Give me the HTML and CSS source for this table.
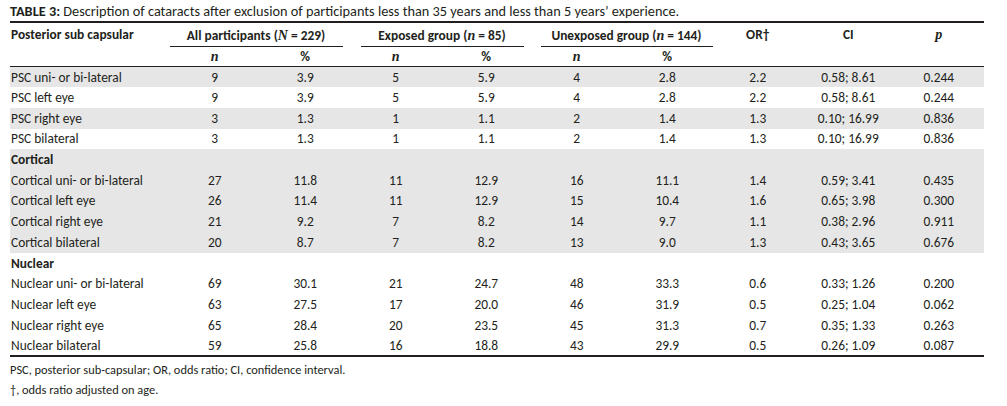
FILE: index.html
```html
<!DOCTYPE html>
<html>
<head>
<meta charset="utf-8">
<link rel="stylesheet" href="styles.css">
</head>
<body>
<div class="wrap">
  <div class="caption"><b>TABLE 3:</b> Description of cataracts after exclusion of participants less than 35 years and less than 5 years’ experience.</div>
  <table class="data">
    <colgroup>
      <col class="c-label"><col><col><col><col><col><col><col><col><col>
    </colgroup>
    <thead>
      <tr class="h1">
        <th class="label">Posterior sub capsular</th>
        <th colspan="2"><div class="grp g1">All participants (<i class="v">N</i> = 229)</div></th>
        <th colspan="2"><div class="grp g2">Exposed group (<i class="v">n</i> = 85)</div></th>
        <th colspan="2"><div class="grp g3">Unexposed group (<i class="v">n</i> = 144)</div></th>
        <th>OR†</th>
        <th>CI</th>
        <th><i class="v">p</i></th>
      </tr>
      <tr class="h2">
        <th></th>
        <th><i class="v">n</i></th><th>%</th>
        <th><i class="v">n</i></th><th>%</th>
        <th><i class="v">n</i></th><th>%</th>
        <th></th><th></th><th></th>
      </tr>
    </thead>
    <tbody>
      <tr class="sh"><td class="label">PSC uni- or bi-lateral</td><td>9</td><td>3.9</td><td>5</td><td>5.9</td><td>4</td><td>2.8</td><td>2.2</td><td>0.58; 8.61</td><td>0.244</td></tr>
      <tr><td class="label">PSC left eye</td><td>9</td><td>3.9</td><td>5</td><td>5.9</td><td>4</td><td>2.8</td><td>2.2</td><td>0.58; 8.61</td><td>0.244</td></tr>
      <tr class="sh"><td class="label">PSC right eye</td><td>3</td><td>1.3</td><td>1</td><td>1.1</td><td>2</td><td>1.4</td><td>1.3</td><td>0.10; 16.99</td><td>0.836</td></tr>
      <tr><td class="label">PSC bilateral</td><td>3</td><td>1.3</td><td>1</td><td>1.1</td><td>2</td><td>1.4</td><td>1.3</td><td>0.10; 16.99</td><td>0.836</td></tr>
      <tr class="sh"><td class="label sect">Cortical</td><td></td><td></td><td></td><td></td><td></td><td></td><td></td><td></td><td></td></tr>
      <tr class="sh"><td class="label">Cortical uni- or bi-lateral</td><td>27</td><td>11.8</td><td>11</td><td>12.9</td><td>16</td><td>11.1</td><td>1.4</td><td>0.59; 3.41</td><td>0.435</td></tr>
      <tr class="sh"><td class="label">Cortical left eye</td><td>26</td><td>11.4</td><td>11</td><td>12.9</td><td>15</td><td>10.4</td><td>1.6</td><td>0.65; 3.98</td><td>0.300</td></tr>
      <tr class="sh"><td class="label">Cortical right eye</td><td>21</td><td>9.2</td><td>7</td><td>8.2</td><td>14</td><td>9.7</td><td>1.1</td><td>0.38; 2.96</td><td>0.911</td></tr>
      <tr class="sh"><td class="label">Cortical bilateral</td><td>20</td><td>8.7</td><td>7</td><td>8.2</td><td>13</td><td>9.0</td><td>1.3</td><td>0.43; 3.65</td><td>0.676</td></tr>
      <tr><td class="label sect">Nuclear</td><td></td><td></td><td></td><td></td><td></td><td></td><td></td><td></td><td></td></tr>
      <tr><td class="label">Nuclear uni- or bi-lateral</td><td>69</td><td>30.1</td><td>21</td><td>24.7</td><td>48</td><td>33.3</td><td>0.6</td><td>0.33; 1.26</td><td>0.200</td></tr>
      <tr><td class="label">Nuclear left eye</td><td>63</td><td>27.5</td><td>17</td><td>20.0</td><td>46</td><td>31.9</td><td>0.5</td><td>0.25; 1.04</td><td>0.062</td></tr>
      <tr><td class="label">Nuclear right eye</td><td>65</td><td>28.4</td><td>20</td><td>23.5</td><td>45</td><td>31.3</td><td>0.7</td><td>0.35; 1.33</td><td>0.263</td></tr>
      <tr class="last"><td class="label">Nuclear bilateral</td><td>59</td><td>25.8</td><td>16</td><td>18.8</td><td>43</td><td>29.9</td><td>0.5</td><td>0.26; 1.09</td><td>0.087</td></tr>
    </tbody>
  </table>
  <div class="notes">
    <p>PSC, posterior sub-capsular; OR, odds ratio; CI, confidence interval.</p>
    <p>†, odds ratio adjusted on age.</p>
  </div>
</div>
</body>
</html>
```

FILE: styles.css
```css
html, body {
  margin: 0;
  padding: 0;
  background: #ffffff;
}
body {
  font-family: Carlito, Lato, "Liberation Sans", sans-serif;
  color: #231f20;
}
.wrap {
  padding: 2px 0 0 10px;
  width: 974px;
}
.caption {
  font-size: 14.3px;
  line-height: 18px;
  height: 19px;
  border-bottom: 2.5px solid #231f20;
}
.caption b {
  font-weight: 700;
}
table.data {
  width: 974px;
  border-collapse: collapse;
  table-layout: fixed;
  font-size: 13.4px;
}
col.c-label {
  width: 159.5px;
}
th, td {
  padding: 0;
  text-align: center;
  white-space: nowrap;
  font-weight: 400;
}
th {
  font-weight: 700;
}
th.label, td.label {
  text-align: left;
  padding-left: 1px;
}
td.sect {
  font-weight: 700;
}
.h1 th {
  height: 20px;
  vertical-align: bottom;
  padding-bottom: 1px;
}
.h1 th .grp {
  border-bottom: 1px solid #231f20;
  padding-bottom: 2px;
  margin-bottom: -1px;
}
.h1 th .g1 { margin-left: 0; margin-right: 8px; }
.h1 th .g2 { margin-left: 10px; margin-right: 8px; }
.h1 th .g3 { margin-left: 9px; margin-right: 0; }
.h1 th:not(:has(.grp)) {
  padding-bottom: 4px;
}
.h1 th.label {
  padding-bottom: 4px;
}
.h2 th {
  height: 19px;
  border-bottom: 1px solid #231f20;
}
i.v {
  font-family: "Liberation Serif", "DejaVu Serif", serif;
  font-style: italic;
  font-size: 1.05em;
}
tbody tr {
  height: 20.7px;
}
tbody tr.sh td {
  background: #e6e6e6;
}
tbody tr.last td {
  border-bottom: 2.5px solid #231f20;
}
.notes {
  font-size: 12.4px;
  padding-top: 3px;
}
.notes p {
  margin: 0;
  line-height: 20px;
}
```
